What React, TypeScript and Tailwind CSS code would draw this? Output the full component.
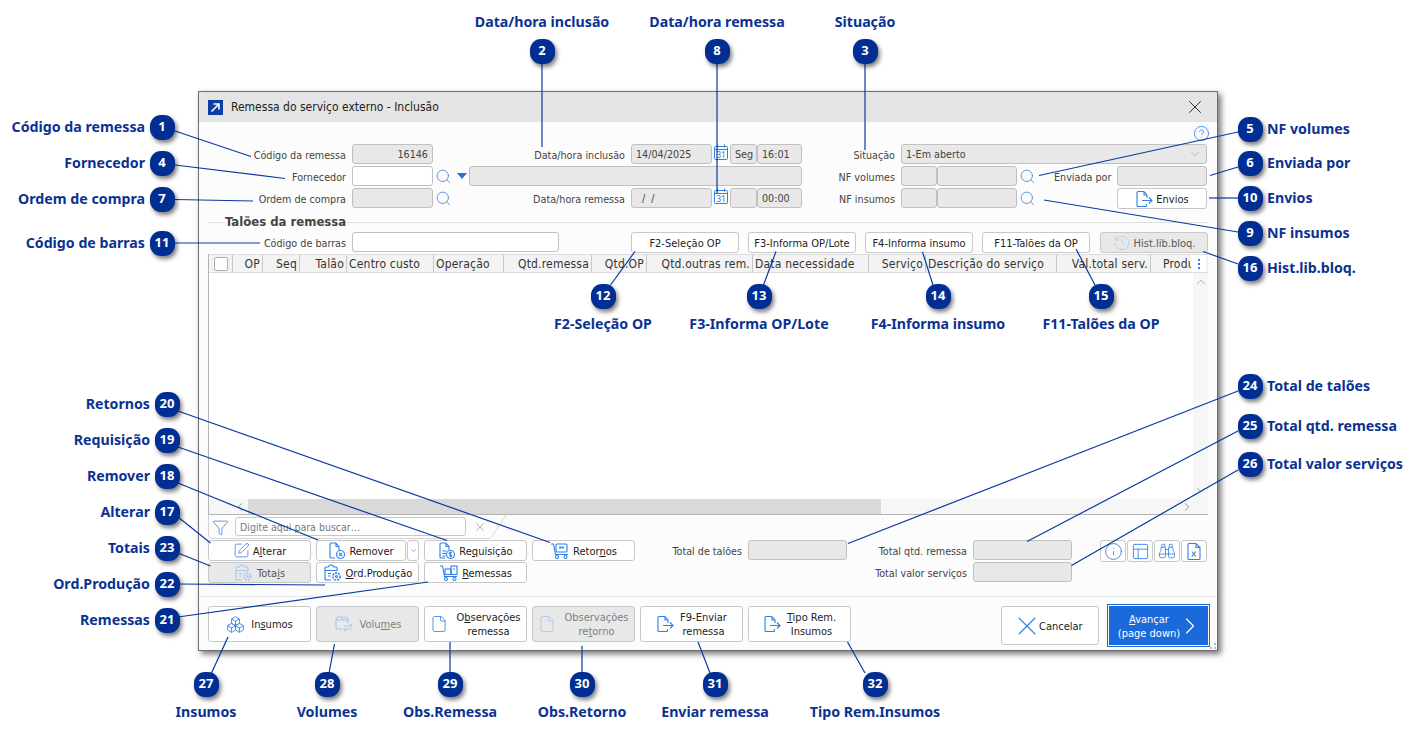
import React from 'react';
import { Search, Boxes, File, X, ChevronRight, ChevronLeft, ChevronUp, ChevronDown, Funnel, SquarePen, History, Binoculars, PanelsTopLeft, Info, CircleHelp } from 'lucide-react';

const BLUE = '#2f7fe6';

type Call = { n: number; x: number; y: number; t: string; side: 'l' | 'r' | 'c' | 'b' ; lx?: number; ly?: number };
const calls: Call[] = [
  { n: 1, x: 162, y: 127, t: 'Código da remessa', side: 'l' },
  { n: 4, x: 162, y: 163, t: 'Fornecedor', side: 'l' },
  { n: 7, x: 162, y: 199, t: 'Ordem de compra', side: 'l' },
  { n: 11, x: 162, y: 243, t: 'Código de barras', side: 'l' },
  { n: 2, x: 542, y: 51, t: 'Data/hora inclusão', side: 'c', ly: 22 },
  { n: 8, x: 717, y: 51, t: 'Data/hora remessa', side: 'c', ly: 22 },
  { n: 3, x: 865, y: 51, t: 'Situação', side: 'c', ly: 22 },
  { n: 5, x: 1250, y: 129, t: 'NF volumes', side: 'r' },
  { n: 6, x: 1250, y: 163, t: 'Enviada por', side: 'r' },
  { n: 10, x: 1250, y: 198, t: 'Envios', side: 'r' },
  { n: 9, x: 1250, y: 233, t: 'NF insumos', side: 'r' },
  { n: 16, x: 1250, y: 268, t: 'Hist.lib.bloq.', side: 'r' },
  { n: 12, x: 603, y: 296, t: 'F2-Seleção OP', side: 'c', ly: 324 },
  { n: 13, x: 759, y: 296, t: 'F3-Informa OP/Lote', side: 'c', ly: 324 },
  { n: 14, x: 938, y: 296, t: 'F4-Informa insumo', side: 'c', ly: 324 },
  { n: 15, x: 1101, y: 296, t: 'F11-Talões da OP', side: 'c', ly: 324 },
  { n: 20, x: 167, y: 404, t: 'Retornos', side: 'l' },
  { n: 19, x: 167, y: 440, t: 'Requisição', side: 'l' },
  { n: 18, x: 167, y: 476, t: 'Remover', side: 'l' },
  { n: 17, x: 167, y: 512, t: 'Alterar', side: 'l' },
  { n: 23, x: 167, y: 548, t: 'Totais', side: 'l' },
  { n: 22, x: 167, y: 584, t: 'Ord.Produção', side: 'l' },
  { n: 21, x: 167, y: 620, t: 'Remessas', side: 'l' },
  { n: 24, x: 1250, y: 386, t: 'Total de talões', side: 'r' },
  { n: 25, x: 1250, y: 426, t: 'Total qtd. remessa', side: 'r' },
  { n: 26, x: 1250, y: 464, t: 'Total valor serviços', side: 'r' },
  { n: 27, x: 206, y: 684, t: 'Insumos', side: 'c', ly: 712 },
  { n: 28, x: 327, y: 684, t: 'Volumes', side: 'c', ly: 712 },
  { n: 29, x: 450, y: 684, t: 'Obs.Remessa', side: 'c', ly: 712 },
  { n: 30, x: 582, y: 684, t: 'Obs.Retorno', side: 'c', ly: 712 },
  { n: 31, x: 715, y: 684, t: 'Enviar remessa', side: 'c', ly: 712 },
  { n: 32, x: 875, y: 684, t: 'Tipo Rem.Insumos', side: 'c', ly: 712 },
];

const lines: number[][] = [
  [175, 131, 251, 156.5], [175, 165, 285, 178.5], [175, 199.5, 253, 201], [175, 243, 260, 243],
  [542, 63, 542, 147], [717, 63, 717, 193], [865, 63, 865, 150],
  [1238, 132, 1039, 175.5], [1238, 167, 1210, 175.5], [1238, 198, 1209, 198], [1238, 232, 1044, 200], [1238, 264, 1203, 251.5],
  [610.5, 285, 635, 251.5], [763.5, 285, 776, 251.5], [933, 285, 922.5, 252], [1095, 285, 1076, 249],
  [178, 411, 550, 542.5], [178, 447, 447, 540.5], [178, 483, 318, 540], [178, 517, 210.5, 543], [178, 553, 210.5, 566], [178, 584, 325, 585], [178, 617, 428, 582],
  [1238, 391, 848, 543.5], [1238, 431, 1027, 541.5], [1238, 470, 1071.5, 565.5],
  [211.5, 673, 228, 637], [329, 673, 334.5, 644], [450, 673, 450, 642], [582, 673, 582, 646], [710, 673, 698, 642], [865, 673, 847.5, 642],
];

function FileSend({ c = BLUE, s = 18 }: { c?: string; s?: number }) {
  return (
    <svg width={s} height={s} viewBox="0 0 18 18" fill="none" stroke={c} strokeWidth="1.1">
      <path d="M9 1.5H3a1 1 0 0 0-1 1v13a1 1 0 0 0 1 1h7.5a1 1 0 0 0 1-1V14M9 1.5l3 3.5M9 1.5V5h3v3" />
      <path d="M7 10.5h10M14 7.5l3 3-3 3" />
    </svg>
  );
}
function FileBadge({ kind }: { kind: 'x' | 's' }) {
  return (
    <svg width="18" height="18" viewBox="0 0 18 18" fill="none" stroke={BLUE} strokeWidth="1.1">
      <path d="M8 1H3a1 1 0 0 0-1 1v13a1 1 0 0 0 1 1h4M8 1l3 3.5M8 1v3.5h3V8" />
      {kind === 's' && <path d="M4.5 9h4M4.5 11.5h3.5M4.5 14h3" />}
      <circle cx="12.5" cy="12.5" r="4" />
      {kind === 'x' ? <path d="M10.8 10.8l3.4 3.4M14.2 10.8l-3.4 3.4" /> : <path d="M13.8 11c-.6-.7-2.6-.7-2.6.5 0 1.2 2.6.7 2.6 2 0 1.1-2 1.1-2.7.4M12.5 9.8v5.4" />}
    </svg>
  );
}
function Cart({ c = BLUE, kind }: { c?: string; kind: 'h' | 'b' }) {
  return (
    <svg width="20" height="18" viewBox="0 0 20 18" fill="none" stroke={c} strokeWidth="1.1">
      <path d="M1 2h2.5l2 10.5H18" />
      <circle cx="7" cy="15" r="1.5" /><circle cx="15.5" cy="15" r="1.5" />
      {kind === 'h' ? <><rect x="6" y="2" width="11" height="8" rx="1" /><path d="M10 4v3M13 4v3M10 5.5h3" /></> : <><rect x="6" y="5" width="6" height="5.5" /><rect x="12" y="2" width="6" height="8.5" /><path d="M14 5h2" /></>}
    </svg>
  );
}
function ClipGear({ c = BLUE }: { c?: string }) {
  return (
    <svg width="20" height="18" viewBox="0 0 20 18" fill="none" stroke={c} strokeWidth="1.1">
      <path d="M8 16H3a1 1 0 0 1-1-1V4a1 1 0 0 1 1-1h2l2-2h2l2 2h2a1 1 0 0 1 1 1v3" />
      <path d="M2 6.5h12M5 9.5h3M5 12h2.5M10 9.5h1" />
      <circle cx="13.5" cy="12.5" r="3.6" strokeDasharray="2 1" strokeWidth="1.6" /><circle cx="13.5" cy="12.5" r="1" />
    </svg>
  );
}
function PackSwap({ c }: { c: string }) {
  return (
    <svg width="20" height="18" viewBox="0 0 20 18" fill="none" stroke={c} strokeWidth="1.1">
      <path d="M8 14H3a1 1 0 0 1-1-1V4l2-2h8l2 2v4M2 5h12M8 2v3" />
      <path d="M10 11h8l-2-2M18 14h-8l2 2" />
    </svg>
  );
}
function Cal() {
  return (
    <svg width="14" height="16" viewBox="0 0 14 16" fill="none" stroke={BLUE} strokeWidth="1">
      <rect x="0.5" y="2.5" width="13" height="13" rx="1" />
      <path d="M0.5 5.5h13M3.5 0.5v3M10.5 0.5v3" />
      <text x="7" y="13.6" textAnchor="middle" fontSize="8.5" fill={BLUE} stroke="none" fontFamily="Noto Sans">31</text>
    </svg>
  );
}
function Mag() {
  return <Search size={17} strokeWidth={1.1} color={BLUE} className="shrink-0" />;
}

function Lab({ w, children }: { w: string; children: React.ReactNode }) {
  return <div className={`${w} shrink-0 pr-[6px] text-right text-[10.7px] leading-[24px] text-[#444] whitespace-nowrap`}>{children}</div>;
}
function Inp({ w, on, right, children }: { w: string; on?: boolean; right?: boolean; children?: React.ReactNode }) {
  return (
    <div className={`${w} ${on ? 'bg-white' : 'bg-[#e8e8e8]'} ${right ? 'justify-end' : 'justify-start'} h-5 shrink-0 flex items-center pl-[4px] pr-[4px] pt-[3px] border border-[#c0c0c0] rounded-[3px] text-[10.7px] text-[#444] whitespace-nowrap`}>
      {children}
    </div>
  );
}
function Btn({ w, h = 'h-[21px]', off, icon, children }: { w: string; h?: string; off?: boolean; icon?: React.ReactNode; children: React.ReactNode }) {
  return (
    <div className={`${w} ${h} ${off ? 'bg-[#e8e8e8] text-[#808080]' : 'bg-white text-[#222]'} shrink-0 flex items-center justify-center gap-[3px] border border-[#c8c8c8] rounded-[3px] text-[11px] leading-[14px] text-center whitespace-nowrap`}>
      {icon}
      <div className="pt-[2px]">{children}</div>
    </div>
  );
}

const cols = [
  ['w-[30px] text-right', 'OP'],
  ['w-[37px] text-right', 'Seq'],
  ['w-[47px] text-right', 'Talão'],
  ['w-[87px] text-left', 'Centro custo'],
  ['w-[70px] text-left', 'Operação'],
  ['w-[88px] text-right', 'Qtd.remessa'],
  ['w-[55px] text-right', 'Qtd.OP'],
  ['w-[106px] text-right', 'Qtd.outras rem.'],
  ['w-[116px] text-left', 'Data necessidade'],
  ['w-[57px] text-right', 'Serviço'],
  ['w-[131px] text-left', 'Descrição do serviço'],
  ['w-[94px] text-right', 'Val.total serv.'],
];

export default function App() {
  return (
    <div className="relative w-[1417px] h-[738px] overflow-hidden bg-white font-['Noto_Sans',sans-serif]">
      <div className="pt-[91px] pl-[198px] font-['DejaVu_Sans_Condensed','Noto_Sans',sans-serif]">
        <div className="relative w-[1020px] h-[560px] flex flex-col border border-[#6e6e6e] bg-[#fcfcfc] shadow-[3px_3px_6px_rgba(0,0,0,0.55)]">
          {/* Title bar */}
          <div className="h-[30px] shrink-0 bg-[#e4e4e4] flex items-center pl-[9px] pr-[11px]">
            <svg width="15" height="15" viewBox="0 0 15 15"><rect width="15" height="15" fill="#0b3fa8" /><path d="M3.5 11.5l7-7M5.5 4h5.5v5.5" stroke="#fff" strokeWidth="1.6" fill="none" /></svg>
            <div className="ml-[8px] text-[12px] text-[#222]">Remessa do serviço externo - Inclusão</div>
            <X size={22} strokeWidth={1} color="#222" className="ml-auto" />
          </div>

          <div className="flex-1 flex flex-col pl-[9px]">
            <div className="pt-[3px] h-[19px] box-content flex justify-end pr-[7px] shrink-0">
              <CircleHelp size={17} strokeWidth={1.2} color={BLUE} />
            </div>
            <div className="flex flex-col gap-[2px]">
              <div className="flex h-5">
                <Lab w="w-[144px]">Código da remessa</Lab>
                <Inp w="w-[81px]" right>16146</Inp>
                <Lab w="w-[198px]">Data/hora inclusão</Lab>
                <Inp w="w-[81px]">14/04/2025</Inp>
                <div className="w-[18px] flex justify-center"><Cal /></div>
                <Inp w="w-[27px]">Seg</Inp>
                <Inp w="w-[45px]">16:01</Inp>
                <Lab w="w-[99px]">Situação</Lab>
                <Inp w="w-[306px]">1-Em aberto<ChevronDown size={14} strokeWidth={1} color="#999" className="ml-auto -mt-[3px]" /></Inp>
              </div>
              <div className="flex h-5">
                <Lab w="w-[144px]">Fornecedor</Lab>
                <Inp w="w-[81px]" on />
                <div className="w-[36px] flex items-center pl-[2px] gap-[5px]">
                  <Mag />
                  <svg width="10" height="6" viewBox="0 0 10 6"><path d="M0 0h10L5 6z" fill="#2c6fd4" /></svg>
                </div>
                <Inp w="w-[333px]" />
                <Lab w="w-[99px]">NF volumes</Lab>
                <Inp w="w-[36px]" />
                <Inp w="w-[80px]" />
                <div className="w-[37px] pl-[2px] flex items-center"><Mag /></div>
                <div className="w-[63px] text-[10.7px] leading-[24px] text-[#444] whitespace-nowrap">Enviada por</div>
                <Inp w="w-[90px]" />
              </div>
              <div className="flex h-5">
                <Lab w="w-[144px]">Ordem de compra</Lab>
                <Inp w="w-[81px]" />
                <div className="w-[198px] flex">
                  <div className="w-[16px] pl-[2px] flex items-center"><Mag /></div>
                  <Lab w="w-[182px]">Data/hora remessa</Lab>
                </div>
                <Inp w="w-[81px]"><span className="pl-[6px]">/ &nbsp;/</span></Inp>
                <div className="w-[18px] flex justify-center"><Cal /></div>
                <Inp w="w-[27px]" />
                <Inp w="w-[45px]">00:00</Inp>
                <Lab w="w-[99px]">NF insumos</Lab>
                <Inp w="w-[36px]" />
                <Inp w="w-[80px]" />
                <div className="w-[100px] pl-[2px] flex items-center"><Mag /></div>
                <Btn w="w-[90px]" icon={<FileSend />}>Envios</Btn>
              </div>
            </div>

            <div className="mt-[6px] h-4 flex items-center">
              <div className="w-[17px] h-px bg-[#e0e0e0]" />
              <div className="w-[121px] text-center text-[13px] font-bold text-[#444] whitespace-nowrap leading-4">Talões da remessa</div>
              <div className="w-[862px] h-px bg-[#e0e0e0]" />
            </div>

            <div className="mt-[2px] flex h-[22px]">
              <Lab w="w-[144px]">Código de barras</Lab>
              <Inp w="w-[207px]" on />
              <div className="ml-[72px] flex gap-[9px]">
                <Btn w="w-[108px]">F2-Seleção OP</Btn>
                <Btn w="w-[108px]">F3-Informa OP/Lote</Btn>
                <Btn w="w-[108px]">F4-Informa insumo</Btn>
                <Btn w="w-[108px]">F11-Talões da OP</Btn>
              </div>
              <div className="ml-[10px]">
                <Btn w="w-[108px]" off icon={<History size={18} strokeWidth={1} color="#a9c6ee" />}><span className="text-[#555]">Hist.lib.bloq.</span></Btn>
              </div>
            </div>

            {/* Table */}
            <div className="w-[1000px] h-[261px] flex flex-col border-l border-b border-[#b4b4b4] bg-white shrink-0">
              <div className="flex h-[19px] shrink-0 bg-[#f3f3f3] border-b border-t border-[#dcdcdc] text-[12px] leading-[19px] tracking-[0.2px] text-[#333]">
                <div className="w-[24px] flex items-center justify-center border-r border-[#c8c8c8]">
                  <div className="w-[14px] h-[14px] bg-white border border-[#b0b0b0] rounded-[2px]" />
                </div>
                {cols.map(([c, t]) => (
                  <div key={t} className={`${c} shrink-0 border-r border-[#c8c8c8] px-[2px] whitespace-nowrap overflow-hidden`}>{t}</div>
                ))}
                <div className="w-[40px] shrink-0 pl-[12px] whitespace-nowrap overflow-hidden">Produ</div>
                <div className="w-[15px] shrink-0 bg-white flex flex-col items-center justify-center gap-[2px]">
                  <div className="w-[2px] h-[2px] bg-[#2f7fe6]" /><div className="w-[2px] h-[2px] bg-[#2f7fe6]" /><div className="w-[2px] h-[2px] bg-[#2f7fe6]" />
                </div>
              </div>
              <div className="flex-1 flex min-h-0">
                <div className="flex-1" />
                <div className="w-[15px] bg-[#f6f6f6] flex flex-col justify-between items-center py-[2px]">
                  <ChevronUp size={14} strokeWidth={1} color="#777" />
                  <ChevronDown size={14} strokeWidth={1} color="#777" />
                </div>
              </div>
              <div className="h-[15px] shrink-0 flex items-center bg-[#f6f6f6]">
                <div className="w-[39px] shrink-0 flex justify-end pr-[1px]"><ChevronLeft size={14} strokeWidth={1} color="#555" /></div>
                <div className="w-[633px] h-[15px] bg-[#d9d9d9]" />
                <div className="flex-1 flex justify-end pr-[14px]"><ChevronRight size={14} strokeWidth={1} color="#555" /></div>
              </div>
            </div>

            {/* Filter */}
            <div className="relative w-[300px] h-[25px] shrink-0 flex items-center">
              <svg className="absolute left-0 top-0" width="300" height="25" viewBox="0 0 300 25" fill="none" stroke="#d4d4d4"><path d="M0.5 0v20a3.5 3.5 0 0 0 3.5 3.5H281a4 4 0 0 0 3-2L298 0" /></svg>
              <Funnel size={17} strokeWidth={1.1} color={BLUE} className="relative ml-[4px]" />
              <div className="relative ml-[6px] w-[231px] h-[19px] mb-[2px] border border-[#c8c8c8] rounded-[3px] bg-white flex items-center pl-[4px] pt-[2px] text-[10.5px] text-[#777]">Digite aqui para buscar…</div>
              <X size={14} strokeWidth={1} color="#888" className="relative ml-[7px] mb-[2px]" />
            </div>

            {/* Buttons + totals */}
            <div className="flex flex-col gap-px">
              <div className="flex h-[21px]">
                <Btn w="w-[103px]" icon={<SquarePen size={17} strokeWidth={1.1} color={BLUE} />}>A<u>l</u>terar</Btn>
                <div className="ml-[5px]"><Btn w="w-[90px]" icon={<FileBadge kind="x" />}>Remover</Btn></div>
                <div className="ml-px w-[12px] h-[21px] border border-[#c8c8c8] rounded-[3px] bg-white flex items-center justify-center"><ChevronDown size={9} strokeWidth={1.5} color={BLUE} /></div>
                <div className="ml-[5px]"><Btn w="w-[103px]" icon={<FileBadge kind="s" />}>Re<u>q</u>uisição</Btn></div>
                <div className="ml-[5px]"><Btn w="w-[103px]" icon={<Cart kind="h" />}>Retor<u>n</u>os</Btn></div>
                <Lab w="w-[113px]">Total de talões</Lab>
                <Inp w="w-[99px]" />
                <Lab w="w-[126px]">Total qtd. remessa</Lab>
                <Inp w="w-[99px]" />
                <div className="ml-[28px] flex gap-px h-[22px]">
                  <Btn w="w-[26px]" h="h-[22px]" ><div className="-mt-[2px]"><Info size={19} strokeWidth={1.1} color={BLUE} /></div></Btn>
                  <Btn w="w-[26px]" h="h-[22px]" ><div className="-mt-[2px]"><PanelsTopLeft size={19} strokeWidth={1.1} color={BLUE} /></div></Btn>
                  <Btn w="w-[26px]" h="h-[22px]" ><div className="-mt-[2px]"><Binoculars size={18} strokeWidth={1.1} color={BLUE} /></div></Btn>
                  <Btn w="w-[26px]" h="h-[22px]" >
                    <svg className="-mt-[2px]" width="16" height="19" viewBox="0 0 16 19" fill="none" stroke={BLUE} strokeWidth="1.1"><path d="M10 1.5H3a1 1 0 0 0-1 1v14a1 1 0 0 0 1 1h10a1 1 0 0 0 1-1V5.5zM10 1.5v4h4" /><path d="M5.8 9.5l4 5M9.8 9.5l-4 5" /></svg>
                  </Btn>
                </div>
              </div>
              <div className="flex h-[21px]">
                <Btn w="w-[103px]" off icon={<ClipGear c="#a9c6ee" />}><span className="text-[#555]">Tota<u>i</u>s</span></Btn>
                <div className="ml-[5px]"><Btn w="w-[103px]" icon={<ClipGear />}><u>O</u>rd.Produção</Btn></div>
                <div className="ml-[5px]"><Btn w="w-[103px]" icon={<Cart kind="b" />}><u>R</u>emessas</Btn></div>
                <div className="w-[108px]" />
                <div className="w-[212px]" />
                <Lab w="w-[126px]">Total valor serviços</Lab>
                <Inp w="w-[99px]" />
              </div>
            </div>

            <div className="mt-[13px] -ml-[9px] h-px bg-[#e6e6e6] shrink-0" />

            {/* Footer buttons */}
            <div className="mt-[9px] flex items-start">
              <Btn w="w-[103px]" h="h-[36px]" icon={<Boxes size={19} strokeWidth={1.1} color={BLUE} />}><span className="pl-[3px]">In<u>s</u>umos</span></Btn>
              <div className="ml-[5px]"><Btn w="w-[103px]" h="h-[36px]" off icon={<PackSwap c="#a9c6ee" />}><span className="pl-[3px]">Volu<u>m</u>es</span></Btn></div>
              <div className="ml-[5px]"><Btn w="w-[103px]" h="h-[36px]" icon={<File size={18} strokeWidth={1.1} color={BLUE} />}><span className="block pl-[5px] -mt-px">O<u>b</u>servações<br />remessa</span></Btn></div>
              <div className="ml-[5px]"><Btn w="w-[103px]" h="h-[36px]" off icon={<File size={18} strokeWidth={1.1} color="#a9c6ee" />}><span className="block pl-[5px] -mt-px">Observações<br />re<u>t</u>orno</span></Btn></div>
              <div className="ml-[5px]"><Btn w="w-[103px]" h="h-[36px]" icon={<FileSend />}><span className="block pl-[3px] -mt-px">F9-Enviar<br />remessa</span></Btn></div>
              <div className="ml-[5px]"><Btn w="w-[103px]" h="h-[36px]" icon={<FileSend />}><span className="block pl-[3px] -mt-px"><u>T</u>ipo Rem.<br />Insumos</span></Btn></div>
              <div className="ml-[150px]">
                <div className="w-[98px] h-[39px] bg-white border border-[#c8c8c8] rounded-[3px] flex items-center pl-[9px] text-[11px] text-[#222]">
                  <X size={32} strokeWidth={0.8} color={BLUE} className="-mr-[4px]" /><span className="pt-[3px]">Cancelar</span>
                </div>
              </div>
              <div className="ml-[8px] -mt-[2px] w-[103px] h-[43px] p-px border border-[#1a6adb] shrink-0">
                <div className="w-full h-full bg-[#1a6adb] flex items-center pl-[8px] text-[11px] leading-[14px] text-white text-center">
                  <div className="w-[64px] shrink-0 pt-[2px]"><u>A</u>vançar<br />(page down)</div>
                  <ChevronRight size={28} strokeWidth={1} color="#fff" className="-ml-[5px] shrink-0" />
                </div>
              </div>
            </div>
          </div>

          {/* Resize grip */}
          <svg className="absolute right-0 bottom-0" width="8" height="8" viewBox="0 0 8 8" fill="#bdbdbd">
            <rect x="5" y="1" width="2" height="2" /><rect x="5" y="5" width="2" height="2" /><rect x="1" y="5" width="2" height="2" />
          </svg>
        </div>
      </div>

      {/* Leader lines */}
      <svg className="absolute left-0 top-0 pointer-events-none" width="1417" height="738" viewBox="0 0 1417 738">
        {lines.map((l, i) => (
          <line key={i} x1={l[0]} y1={l[1]} x2={l[2]} y2={l[3]} stroke="#0a3a9f" strokeWidth="1.2" />
        ))}
      </svg>

      {/* Callouts */}
      {calls.map((c) => (
        <React.Fragment key={c.n}>
          <div
            className="absolute w-[25px] h-[25px] rounded-[11px] bg-[#002e93] text-white text-[13px] font-bold flex items-center justify-center shadow-[2px_3px_4px_rgba(0,0,0,0.5)]"
            style={{ left: c.x - 12.5, top: c.y - 12.5 }}
          >
            {c.n}
          </div>
          {c.side === 'l' && (
            <div className="absolute text-[14.2px] font-bold text-[#0b3290] whitespace-nowrap leading-5 text-right" style={{ right: 1417 - (c.x - 17), top: c.y - 10 }}>{c.t}</div>
          )}
          {c.side === 'r' && (
            <div className="absolute text-[14.2px] font-bold text-[#0b3290] whitespace-nowrap leading-5" style={{ left: c.x + 17, top: c.y - 10 }}>{c.t}</div>
          )}
          {c.side === 'c' && (
            <div className="absolute text-[14.2px] font-bold text-[#0b3290] whitespace-nowrap leading-5 -translate-x-1/2" style={{ left: c.x, top: (c.ly ?? 0) - 10 }}>{c.t}</div>
          )}
        </React.Fragment>
      ))}
    </div>
  );
}
